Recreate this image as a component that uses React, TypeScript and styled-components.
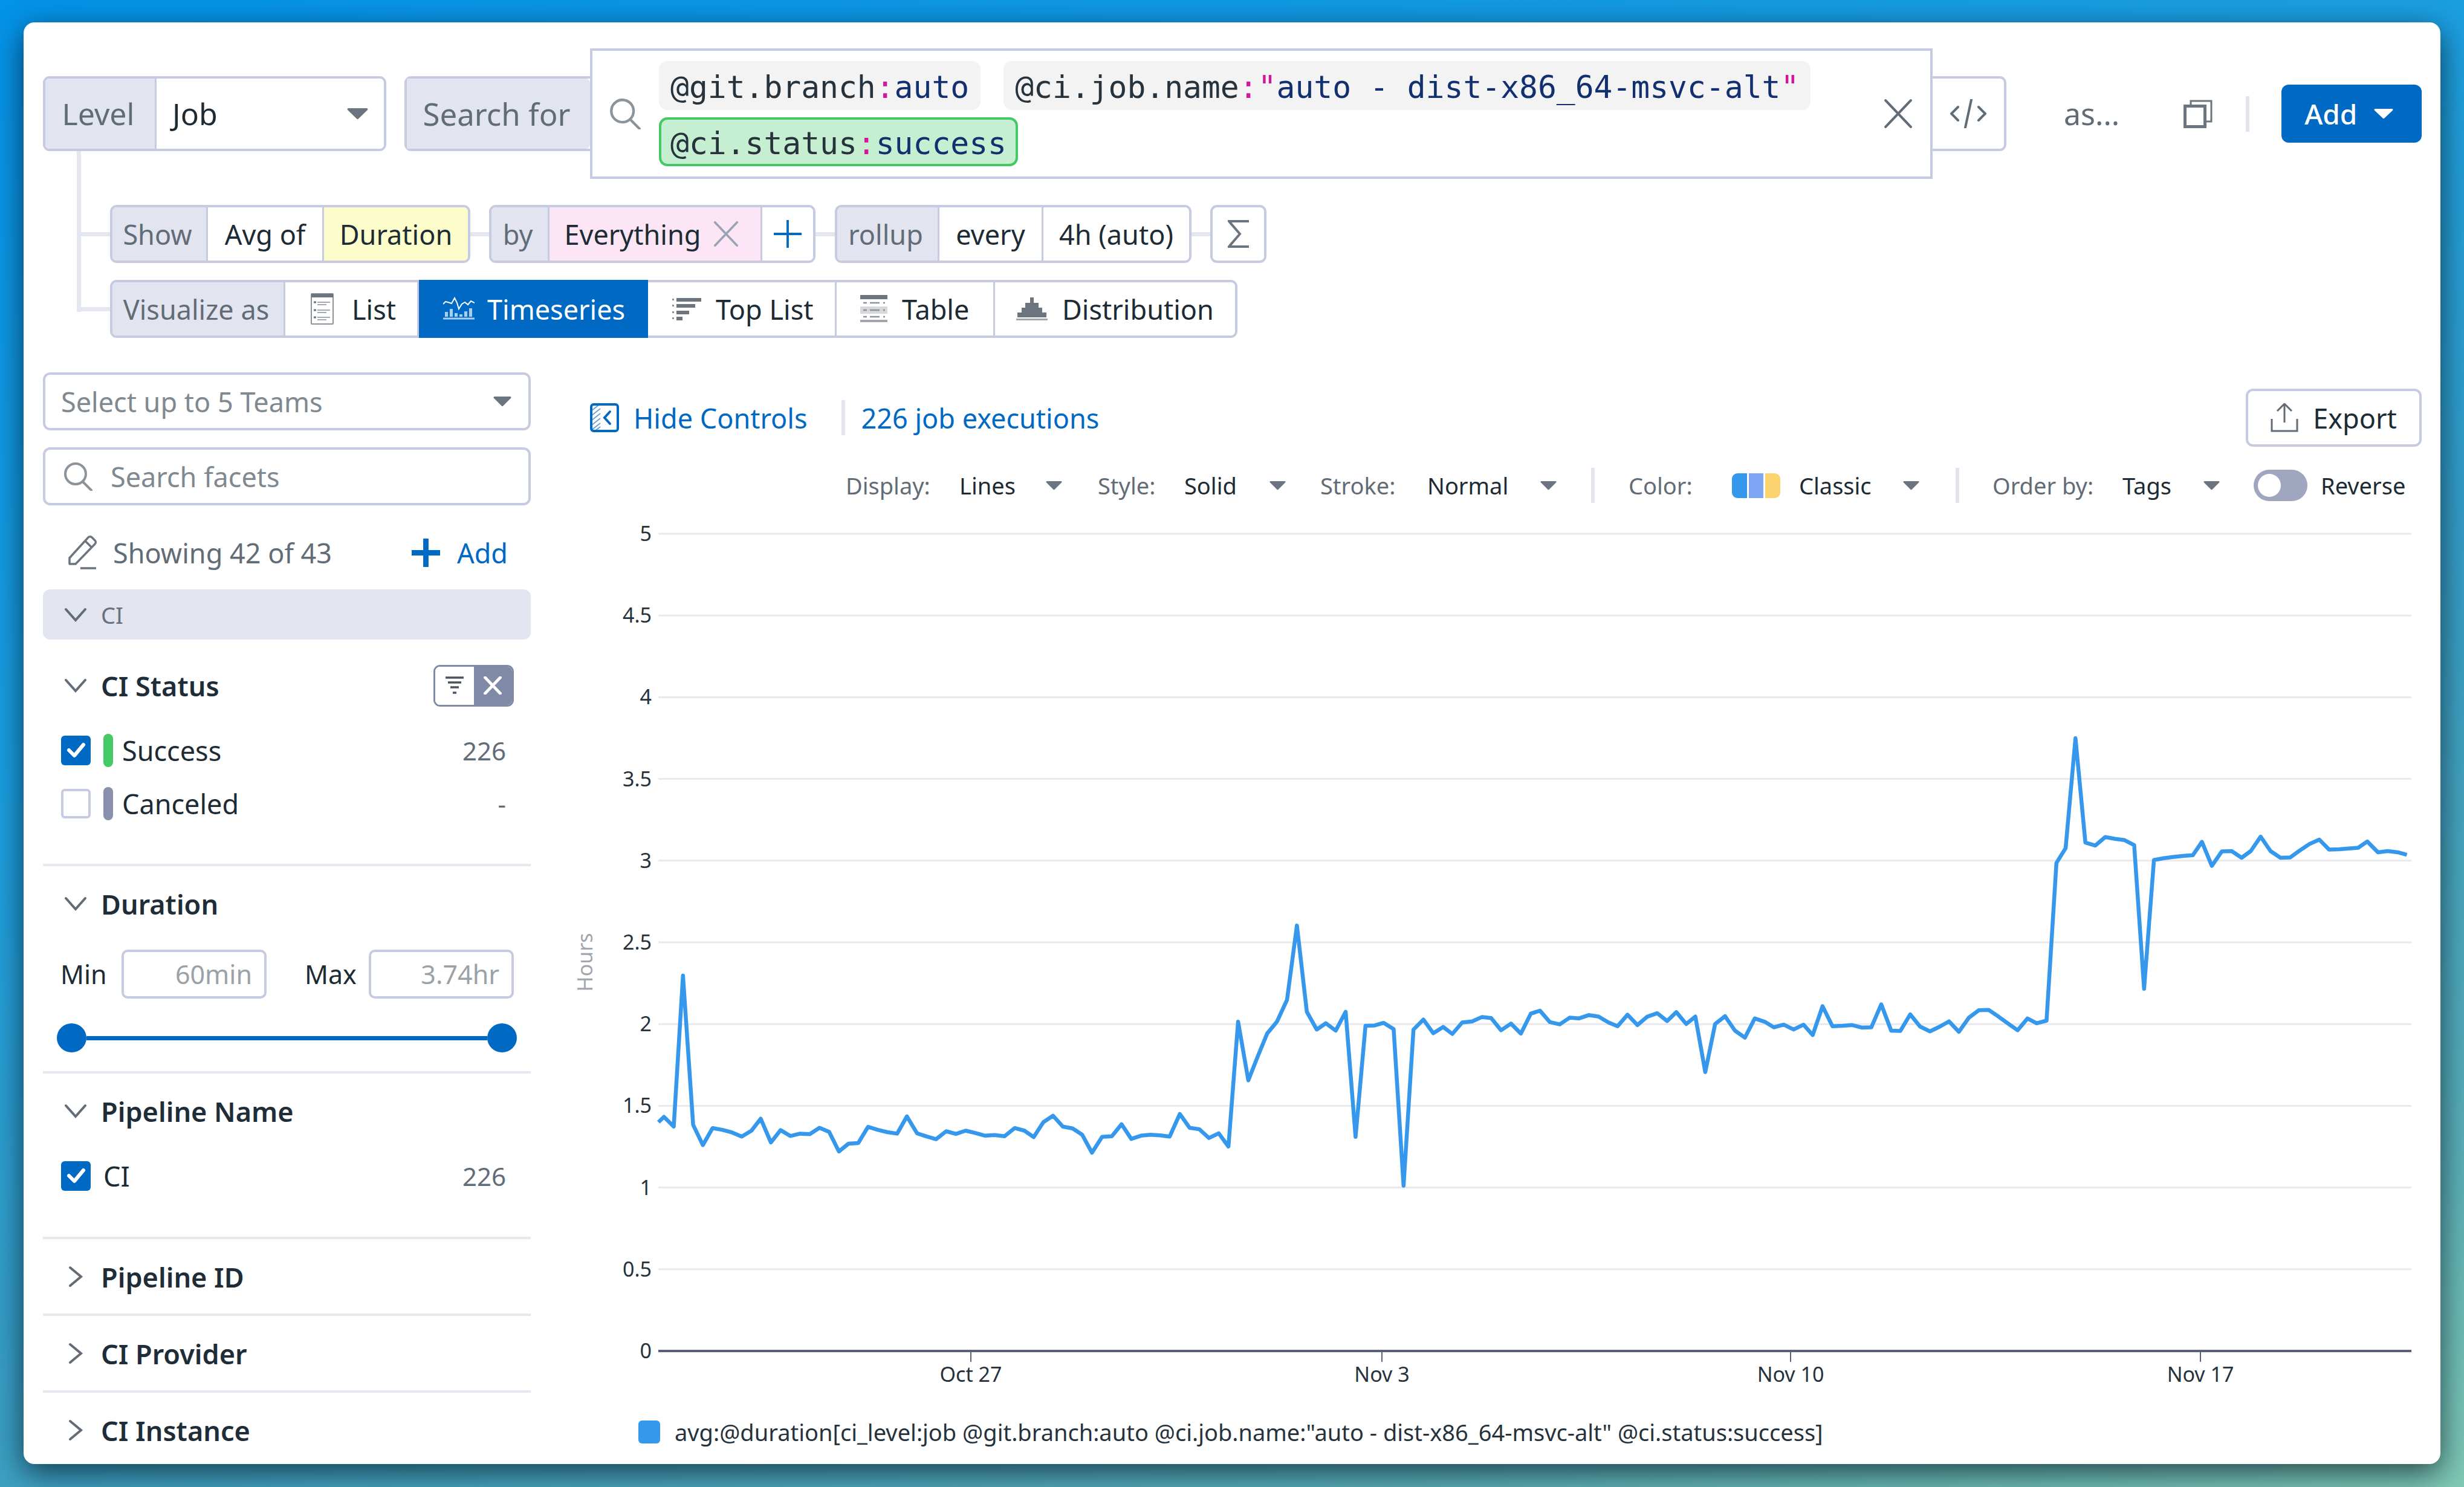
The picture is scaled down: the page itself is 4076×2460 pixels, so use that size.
import React from "react";
import styled, { createGlobalStyle } from "styled-components";

const borderColor = "#c7cbe1";
const labelBg = "#e2e5ef";
const blue = "#0069c4";
const ink = "#1c2b34";
const muted = "#626c77";

const GlobalStyle = createGlobalStyle`
  html, body { margin: 0; padding: 0; }
  body { font-family: "Noto Sans", "Open Sans", sans-serif; color: ${ink}; }
  * { box-sizing: border-box; }
`;

const Page = styled.div`
  width: 4076px;
  height: 2460px;
  padding: 37px 39px 38px;
  overflow: hidden;
  background: linear-gradient(162deg, #0493e8 0%, #1b9fe0 35%, #3a9fc4 62%, #5ab0b8 85%, #80c9b4 100%);
`;

const Card = styled.div`
  height: 100%;
  padding: 43px 31px 0 32px;
  background: #fff;
  border-radius: 18px;
  box-shadow: 0 14px 50px rgba(0, 15, 30, 0.7);
  overflow: hidden;
`;

const TopRow = styled.div`
  display: flex;
  align-items: center;
  height: 216px;
`;

const Group = styled.div<{ $h: number; $ml?: number }>`
  display: flex;
  flex: none;
  height: ${({ $h }) => $h}px;
  margin-left: ${({ $ml = 0 }) => $ml}px;
  border: 4px solid ${borderColor};
  border-radius: 11px;
`;

const Segment = styled.div<{ $w: number; $tone?: string; $fs?: number }>`
  display: flex;
  flex: none;
  align-items: center;
  justify-content: center;
  gap: 22px;
  width: ${({ $w }) => $w}px;
  padding-right: ${({ $tone }) => ($tone === "label" ? 6 : 0)}px;
  font-size: ${({ $fs = 45 }) => $fs}px;
  white-space: nowrap;
  color: ${({ $tone }) => ($tone === "label" ? muted : ink)};
  background: ${({ $tone }) =>
    $tone === "label" ? labelBg : $tone === "yellow" ? "#fdfdcc" : $tone === "pink" ? "#fce6f5" : "#fff"};
  &:first-child {
    border-radius: 7px 0 0 7px;
  }
  &:last-child {
    border-radius: 0 7px 7px 0;
  }
  & + & {
    border-left: 3px solid ${borderColor};
  }
`;

const LevelValue = styled(Segment)`
  justify-content: space-between;
  padding: 0 26px 0 26px;
`;

const RemovableSegment = styled(Segment)`
  gap: 20px;
  padding-right: 10px;
`;

const VizTab = styled(Segment)<{ $pl: number; $gap: number; $active?: boolean }>`
  justify-content: flex-start;
  gap: ${({ $gap }) => $gap}px;
  padding-left: ${({ $pl }) => $pl}px;
  ${({ $active }) =>
    $active
      ? `
    /* the selected tab paints over the group's border */
    margin: -4px 0;
    color: #fff;
    background: ${blue};
    && + * { border-left: 0; }
  `
      : ""}
`;

const SearchLabel = styled(Group)`
  border-right: 0;
  border-radius: 11px 0 0 11px;
`;

const SearchBox = styled.div`
  display: flex;
  flex: none;
  align-items: center;
  width: 2221px;
  height: 216px;
  padding: 0 28px 0 28px;
  border: 4px solid ${borderColor};
`;

const ChipWrap = styled.div`
  display: flex;
  flex: 1;
  flex-wrap: wrap;
  gap: 12px 38px;
  margin: 0 40px 0 30px;
`;

const Chip = styled.div<{ $ok?: boolean }>`
  display: flex;
  align-items: center;
  height: 81px;
  padding: 4px ${({ $ok }) => ($ok ? 15 : 19)}px 0;
  font-family: "DejaVu Sans Mono", monospace;
  font-size: 51.3px;
  white-space: pre;
  background: ${({ $ok }) => ($ok ? "#c6eed0" : "#f3f3f4")};
  border: ${({ $ok }) => ($ok ? "4px solid #45c866" : "0")};
  border-radius: 14px;
`;

const ChipKey = styled.span`
  color: #26323c;
`;
const ChipColon = styled.span`
  color: #d1179d;
`;
const ChipValue = styled.span`
  color: #12306f;
`;

const CodeButton = styled.div`
  display: flex;
  flex: none;
  align-items: center;
  justify-content: center;
  width: 122px;
  height: 124px;
  border: 4px solid ${borderColor};
  border-left: 0;
  border-radius: 0 11px 11px 0;
`;

const AsLabel = styled.div`
  margin-left: 95px;
  font-size: 50px;
  color: ${muted};
`;

const CopyButton = styled.div`
  display: flex;
  margin-left: 106px;
`;

const VDivider = styled.div<{ $h: number; $ml: number }>`
  flex: none;
  width: 6px;
  height: ${({ $h }) => $h}px;
  margin-left: ${({ $ml }) => $ml}px;
  background: #e3e5ee;
`;

const AddButton = styled.div`
  display: flex;
  flex: none;
  align-items: center;
  justify-content: space-between;
  width: 232px;
  height: 96px;
  margin-left: 53px;
  padding: 0 47px 0 38px;
  color: #fff;
  font-size: 46px;
  font-weight: 500;
  background: ${blue};
  border-radius: 12px;
`;

const QueryRows = styled.div`
  position: relative;
  display: flex;
  flex-direction: column;
  gap: 28px;
  margin: 43px 0 0 111px;

  /* tree connector from the Level box down to the last row */
  &::before {
    content: "";
    position: absolute;
    left: -55px;
    top: -89px;
    width: 7px;
    height: 266px;
    background: #e4e6f0;
  }
`;

const QueryRow = styled.div`
  position: relative;
  display: flex;
  align-items: center;

  &::before {
    content: "";
    position: absolute;
    left: -55px;
    top: 45px;
    width: 55px;
    height: 7px;
    background: #e4e6f0;
  }
`;

const Link = styled.div<{ $w: number }>`
  flex: none;
  width: ${({ $w }) => $w}px;
  height: 7px;
  background: #e4e6f0;
`;

const SigmaBox = styled.div`
  display: flex;
  align-items: center;
  justify-content: center;
  width: 93px;
  height: 96px;
  border: 4px solid ${borderColor};
  border-radius: 11px;
`;

const Main = styled.div`
  display: grid;
  grid-template-columns: 807px 3066px;
  column-gap: 62px;
  margin-top: 57px;
`;

const Sidebar = styled.div`
  display: flex;
  flex-direction: column;
`;

const Field = styled.div`
  display: flex;
  flex: none;
  align-items: center;
  height: 96px;
  padding: 0 28px 0 26px;
  font-size: 45px;
  color: #808890;
  border: 4px solid ${borderColor};
  border-radius: 12px;
`;

const TeamsField = styled(Field)`
  justify-content: space-between;
`;

const FacetField = styled(Field)`
  gap: 30px;
  margin-top: 28px;
  padding-left: 30px;
`;

const ShowingRow = styled.div`
  display: flex;
  align-items: center;
  height: 90px;
  margin: 33px 0 16px;
  padding: 0 38px 0 42px;
  font-size: 45px;
  color: ${muted};
`;

const ShowingText = styled.div`
  flex: 1;
  margin-left: 26px;
`;

const AddFacet = styled.div`
  display: flex;
  align-items: center;
  gap: 28px;
  color: ${blue};
`;

const Band = styled.div`
  display: flex;
  align-items: center;
  gap: 24px;
  height: 83px;
  padding-left: 36px;
  font-size: 38px;
  color: #68727f;
  background: ${labelBg};
  border-radius: 12px;
`;

const Section = styled.div<{ $pt?: number; $pb: number }>`
  padding: ${({ $pt = 22 }) => $pt}px 0 ${({ $pb }) => $pb}px;
  border-bottom: 4px solid #e6e8f0;
`;

const SectionHeader = styled.div`
  display: flex;
  align-items: center;
  height: 80px;
  padding-left: 36px;
  font-size: 45px;
  font-weight: 600;
  color: #1f2d38;
`;

const ChevronSlot = styled.div`
  display: flex;
  flex: none;
  width: 60px;
  align-items: center;
  justify-content: flex-start;
`;

const FilterToggle = styled.div`
  display: flex;
  width: 133px;
  height: 69px;
  margin-left: auto;
  margin-right: 28px;
  overflow: hidden;
  border: 3px solid #8089a6;
  border-radius: 11px;
`;

const ToggleHalf = styled.div<{ $on?: boolean }>`
  display: flex;
  flex: 1;
  align-items: center;
  justify-content: center;
  background: ${({ $on }) => ($on ? "#8089a6" : "#fff")};
`;

const FacetRows = styled.div`
  margin-top: 23px;
  padding: 0 41px 0 30px;
`;

const FacetRow = styled.div`
  display: flex;
  align-items: center;
  height: 88px;
  font-size: 45px;
`;

const Check = styled.div<{ $on?: boolean }>`
  display: flex;
  flex: none;
  align-items: center;
  justify-content: center;
  width: 49px;
  height: 49px;
  background: ${({ $on }) => ($on ? blue : "#fff")};
  border: ${({ $on }) => ($on ? "0" : `4px solid ${borderColor}`)};
  border-radius: 6px;
`;

const StatusBar = styled.div<{ $color: string }>`
  flex: none;
  width: 16px;
  height: 55px;
  margin-left: 21px;
  background: ${({ $color }) => $color};
  border-radius: 8px;
`;

const FacetName = styled.div<{ $ml: number }>`
  flex: 1;
  margin-left: ${({ $ml }) => $ml}px;
`;

const FacetCount = styled.div`
  color: ${muted};
  font-size: 42px;
`;

const RangeRow = styled.div`
  display: flex;
  align-items: center;
  height: 81px;
  margin-top: 36px;
  padding-left: 29px;
  font-size: 43px;
`;

const RangeLabel = styled.div<{ $w: number; $ml?: number }>`
  width: ${({ $w }) => $w}px;
  margin-left: ${({ $ml = 0 }) => $ml}px;
`;

const RangeInput = styled.div`
  display: flex;
  align-items: center;
  justify-content: flex-end;
  width: 240px;
  height: 81px;
  padding-right: 20px;
  color: #9aa2a8;
  border: 4px solid ${borderColor};
  border-radius: 10px;
`;

const Slider = styled.div`
  display: flex;
  align-items: center;
  width: 761px;
  height: 48px;
  margin: 41px 0 0 23px;
`;

const Knob = styled.div`
  flex: none;
  width: 49px;
  height: 48px;
  background: ${blue};
  border-radius: 50%;
`;

const Track = styled.div`
  flex: 1;
  height: 7px;
  background: ${blue};
`;

const Content = styled.div`
  display: flex;
  flex-direction: column;
`;

const ContentTop = styled.div`
  display: flex;
  align-items: center;
  height: 96px;
  margin-top: 27px;
  padding-left: 36px;
  font-size: 45px;
  color: ${blue};
`;

const HideLink = styled.div`
  display: flex;
  align-items: center;
  gap: 24px;
`;

const Executions = styled.div`
  margin-left: 27px;
`;

const ExportButton = styled.div`
  display: flex;
  align-items: center;
  justify-content: center;
  gap: 24px;
  width: 291px;
  height: 96px;
  margin-left: auto;
  color: ${ink};
  border: 4px solid ${borderColor};
  border-radius: 12px;
`;

const ControlRow = styled.div`
  display: flex;
  align-items: center;
  height: 60px;
  margin-top: 34px;
  padding-left: 459px;
  font-size: 38px;
`;

const Control = styled.div<{ $ml: number }>`
  display: flex;
  align-items: center;
  margin-left: ${({ $ml }) => $ml}px;
`;

const ControlLabel = styled.div<{ $w: number }>`
  width: ${({ $w }) => $w}px;
  color: ${muted};
`;

const ControlValue = styled.div<{ $w: number }>`
  width: ${({ $w }) => $w}px;
  color: ${ink};
`;

const Swatch = styled.div`
  display: flex;
  gap: 3px;
  width: 80px;
  height: 41px;
  margin-right: 31px;
  overflow: hidden;
  border-radius: 9px;
`;

const SwatchStripe = styled.div<{ $color: string }>`
  flex: 1;
  background: ${({ $color }) => $color};
`;

const Switch = styled.div`
  display: flex;
  align-items: center;
  width: 89px;
  height: 52px;
  margin-left: 56px;
  padding-left: 7px;
  background: #a0a6bf;
  border-radius: 26px;
`;

const SwitchKnob = styled.div`
  width: 38px;
  height: 38px;
  background: #fff;
  border-radius: 50%;
`;

const SwitchLabel = styled.div`
  margin-left: 22px;
  color: ${ink};
`;

const ChartSvg = styled.svg`
  display: block;
  width: 3066px;
  height: 1460px;
  margin-top: 7px;
`;

const Legend = styled.div`
  display: flex;
  align-items: center;
  height: 38px;
  margin-top: 50px;
  padding-left: 116px;
  font-size: 38px;
  white-space: nowrap;
  color: #26323c;
`;

const LegendSwatch = styled.div`
  width: 36px;
  height: 38px;
  margin-right: 24px;
  background: #3598ec;
  border-radius: 6px;
`;

const Caret = ({ w, h, color = "#6c7480" }: { w: number; h: number; color?: string }) => (
  <svg width={w} height={h} viewBox="0 0 30 18" preserveAspectRatio="none">
    <path d="M2 1h26a1.5 1.5 0 0 1 1.2 2.4L16.2 16.6a1.6 1.6 0 0 1-2.4 0L.8 3.4A1.5 1.5 0 0 1 2 1z" fill={color} />
  </svg>
);

const SearchGlyph = ({ size, color = "#8b939b" }: { size: number; color?: string }) => (
  <svg width={size} height={size} viewBox="0 0 48 48" fill="none" stroke={color} strokeWidth="4" strokeLinecap="round">
    <circle cx="20" cy="20" r="17" />
    <path d="M32 33l14 14" />
  </svg>
);

const Cross = ({ size, color, width = 4 }: { size: number; color: string; width?: number }) => (
  <svg width={size} height={size} viewBox="0 0 48 48" fill="none" stroke={color} strokeWidth={width} strokeLinecap="round">
    <path d="M4 3l40 42M44 3L4 45" />
  </svg>
);

const Chevron = ({ open }: { open: boolean }) =>
  open ? (
    <svg width="36" height="24" viewBox="0 0 36 24" fill="none" stroke="#626c77" strokeWidth="4" strokeLinecap="round">
      <path d="M2 3l16 18L34 3" />
    </svg>
  ) : (
    <svg width="36" height="36" viewBox="0 0 36 36" fill="none" stroke="#626c77" strokeWidth="4" strokeLinecap="round">
      <path d="M9 3l18 15L9 33" />
    </svg>
  );

const CheckMark = () => (
  <svg width="32" height="26" viewBox="0 0 32 26" fill="none" stroke="#fff" strokeWidth="6" strokeLinecap="round" strokeLinejoin="round">
    <path d="M4 13l9 9L28 4" />
  </svg>
);

const ListIcon = () => (
  <svg width="38" height="52" viewBox="0 0 38 52">
    <rect x="1" y="1" width="36" height="50" rx="1" fill="#fff" stroke="#8b929a" strokeWidth="2" />
    <rect x="1" y="1" width="36" height="6" fill="#6c7480" />
    <path d="M11 15h21M11 19h15M11 28h21M11 32h15M11 40h21M11 44h15" stroke="#a4aab1" strokeWidth="2" />
    <path d="M5 15h4M5 28h4M5 40h4" stroke="#6c7480" strokeWidth="3" />
  </svg>
);

const TimeseriesIcon = () => (
  <svg width="52" height="40" viewBox="0 0 52 40" fill="none">
    <path d="M3 25h5v8H3zM11 20h5v13h-5zM19 27h5v6h-5zM27 29h5v4h-5zM35 24h5v9h-5zM43 19h5v14h-5z" fill="#a9cdec" />
    <path d="M0 36h52" stroke="#a9cdec" strokeWidth="3" />
    <path d="M0 12l4-4 4 1 6 2 5-9 4 8 3 10 5-8 5-3 5 4 5-6 6 3" stroke="#fff" strokeWidth="2" />
  </svg>
);

const TopListIcon = () => (
  <svg width="48" height="38" viewBox="0 0 48 38" fill="#6c7480">
    <path d="M7 1h41v6H7zM7 11h31v6H7zM7 22h21v6H7zM7 32h10v6H7z" />
    <path d="M0 2h3v3H0zM0 12h3v3H0zM0 23h3v3H0zM0 33h3v3H0z" fill="#8b929a" />
  </svg>
);

const TableIcon = () => (
  <svg width="45" height="46" viewBox="0 0 45 46">
    <rect width="45" height="7" fill="#6c7480" />
    <rect y="19" width="45" height="12" fill="#d6d8dc" />
    <rect y="41" width="45" height="4" fill="#a0a6ac" />
    <path d="M5 13h6M16 13h16M38 13h3M5 25h6M16 25h16M38 25h3M5 36h6M16 36h16M38 36h3" stroke="#8b929a" strokeWidth="2.5" />
  </svg>
);

const DistributionIcon = () => (
  <svg width="52" height="39" viewBox="0 0 52 39">
    <path d="M23 0h6v9h8v8h6v8h7v8H2v-8h7v-8h6V9h8z" fill="#6c7480" />
    <rect y="35" width="52" height="3" fill="#9ea5ac" />
  </svg>
);

const SigmaIcon = () => (
  <svg width="36" height="46" viewBox="0 0 36 46" fill="none" stroke="#6c7480" strokeWidth="4">
    <path d="M35 2H2l18 21L2 44h33" />
  </svg>
);

const CodeIcon = () => (
  <svg width="60" height="48" viewBox="0 0 60 48" fill="none" stroke="#626c77" strokeWidth="4" strokeLinecap="round">
    <path d="M13 13L2 24l11 11M47 13l11 11-11 11M35 1L25 47" />
  </svg>
);

const CopyIcon = () => (
  <svg width="48" height="47" viewBox="0 0 48 47" fill="none" stroke="#6c7480">
    <path d="M12 8V2h34v34h-8" strokeWidth="3" />
    <rect x="2.5" y="10.5" width="33" height="34" strokeWidth="5" />
  </svg>
);

const PencilIcon = () => (
  <svg width="48" height="58" viewBox="0 0 48 58" fill="none" stroke="#6c7480" strokeWidth="3.5" strokeLinejoin="round">
    <path d="M2 48V38L33 4a4 4 0 0 1 6 0l5 5a4 4 0 0 1 0 6L12 48z" />
    <path d="M28 10l11 11M20 55h26" />
  </svg>
);

const PlusIcon = ({ size, stroke }: { size: number; stroke: number }) => (
  <svg width={size} height={size} viewBox="0 0 48 48" stroke={blue} strokeWidth={stroke}>
    <path d="M24 0v48M0 24h48" />
  </svg>
);

const FilterIcon = () => (
  <svg width="32" height="32" viewBox="0 0 32 32" stroke="#4a5360" strokeWidth="3.5">
    <path d="M1 3h30M5 11h22M9 19h14M13 28h6" />
  </svg>
);

const PanelIcon = () => (
  <svg width="48" height="48" viewBox="0 0 48 48" fill="none">
    <g stroke="#5c9fdc" strokeWidth="1.6">
      <path d="M3 12l14-11M3 20L17 9M3 28L17 17M3 36l14-11M3 44l14-11M8 46l9-7" />
    </g>
    <rect x="2" y="2" width="44" height="44" rx="4" stroke={blue} strokeWidth="4" />
    <path d="M33 14L24 24l9 10" stroke={blue} strokeWidth="4" strokeLinecap="round" />
  </svg>
);

const UploadIcon = () => (
  <svg width="46" height="48" viewBox="0 0 46 48" fill="none" stroke="#626c77" strokeWidth="3">
    <path d="M23 32V2M11 13L23 1l12 12M2 26v20h42V26" />
  </svg>
);

// points traced from the reference, in two crops with their own scales
const earlyPoints = [
  [195, 1148], [207, 1130], [228, 1163], [248, 648], [270, 1157], [291, 1226], [312, 1168], [333, 1174],
  [354, 1183], [375, 1197], [396, 1177], [416, 1136], [438, 1217], [459, 1175], [480, 1195], [501, 1187],
  [522, 1189], [543, 1167], [564, 1181], [585, 1248], [606, 1221], [627, 1219], [648, 1164], [669, 1174],
  [690, 1182], [711, 1187], [732, 1128], [754, 1186], [775, 1197], [795, 1206], [817, 1179], [838, 1188],
  [859, 1177], [880, 1185], [901, 1194], [922, 1192], [943, 1196], [965, 1168], [986, 1177], [1006, 1199],
  [1027, 1148], [1048, 1126], [1069, 1163], [1090, 1169], [1111, 1191], [1132, 1252], [1154, 1198],
  [1175, 1196], [1196, 1155], [1217, 1205], [1238, 1194], [1258, 1191], [1279, 1193], [1300, 1197],
  [1322, 1120], [1343, 1167], [1364, 1172], [1385, 1202], [1406, 1186], [1427, 1231], [1448, 805],
  [1470, 1005], [1490, 925], [1511, 845], [1532, 805],
].map(([x, y]) => [940 + x / 1.3067, 1300 + y / 2.063]);

const latePoints = [
  [23, 905], [36, 704], [49, 937], [62, 985], [74, 968], [87, 988], [100, 937], [113, 1275], [126, 975],
  [138, 974], [150, 967], [163, 984], [176, 1407], [189, 985], [202, 958], [215, 995], [228, 978], [240, 997],
  [253, 966], [266, 963], [279, 951], [291, 954], [304, 987], [317, 969], [330, 996], [343, 942], [355, 934],
  [368, 965], [381, 971], [394, 953], [406, 955], [419, 946], [432, 950], [445, 966], [457, 976], [470, 945],
  [483, 973], [496, 950], [509, 941], [522, 962], [534, 938], [547, 970], [559, 950], [572, 1100], [585, 970],
  [598, 949], [611, 988], [624, 1007], [637, 955], [650, 964], [662, 979], [675, 972], [688, 985], [701, 972],
  [713, 1000], [726, 922], [739, 976], [752, 975], [765, 973], [778, 980], [790, 979], [803, 917], [816, 988],
  [828, 989], [841, 944], [854, 977], [867, 990], [880, 977], [892, 963], [905, 991], [918, 953], [931, 933],
  [944, 932], [957, 950], [969, 968], [982, 987], [995, 955], [1007, 968], [1020, 961], [1033, 535], [1045, 495],
  [1058, 198], [1071, 480], [1084, 488], [1097, 465], [1110, 470], [1122, 473], [1135, 487], [1148, 875],
  [1161, 527], [1174, 522], [1186, 519], [1199, 516], [1212, 514], [1224, 478], [1237, 543], [1250, 504],
  [1263, 503], [1276, 521], [1288, 503], [1301, 464], [1314, 503], [1327, 521], [1340, 520], [1352, 502],
  [1365, 484], [1378, 472], [1391, 499], [1404, 498], [1416, 496], [1429, 494], [1441, 477], [1455, 506],
  [1468, 503], [1481, 506], [1493, 513],
].map(([x, y]) => [2100 + x / 0.7935, 1100 + y / 1.633]);

const linePath = [...earlyPoints, ...latePoints]
  .map(([x, y], i) => `${i ? "L" : "M"}${x.toFixed(1)} ${y.toFixed(1)}`)
  .join(" ");

const yTicks = ["5", "4.5", "4", "3.5", "3", "2.5", "2", "1.5", "1", "0.5"];
const xTicks = [
  { x: 1606, label: "Oct 27" },
  { x: 2286, label: "Nov 3" },
  { x: 2962, label: "Nov 10" },
  { x: 3640, label: "Nov 17" },
];

const Chart = () => (
  <ChartSvg viewBox="940 840 3066 1460" fontFamily="'Noto Sans', sans-serif" fontSize="34">
    {yTicks.map((label, i) => {
      const y = 883 + i * 135.2;
      return (
        <g key={label}>
          <line x1="1089" x2="3989" y1={y} y2={y} stroke="#e9e9eb" strokeWidth="3" />
          <text x="1078" y={y + 12} textAnchor="end" fill="#26323c">
            {label}
          </text>
        </g>
      );
    })}
    <text x="1078" y="2247" textAnchor="end" fill="#26323c">
      0
    </text>
    <line x1="1089" x2="3989" y1="2235" y2="2235" stroke="#5a6078" strokeWidth="4" />
    {xTicks.map(({ x, label }) => (
      <g key={label}>
        <line x1={x} x2={x} y1="2235" y2="2253" stroke="#5a6078" strokeWidth="2" />
        <text x={x} y="2286" textAnchor="middle" fill="#26323c">
          {label}
        </text>
      </g>
    ))}
    <text transform="translate(980 1592) rotate(-90)" textAnchor="middle" fill="#a0a6ad">
      Hours
    </text>
    <path d={linePath} fill="none" stroke="#3598ec" strokeWidth="6.5" strokeLinejoin="round" />
  </ChartSvg>
);

const controls = [
  { ml: 0, label: "Display:", lw: 188, value: "Lines", vw: 143 },
  { ml: 59, label: "Style:", lw: 143, value: "Solid", vw: 141 },
  { ml: 57, label: "Stroke:", lw: 177, value: "Normal", vw: 187 },
];

const App: React.FC = () => (
  <Page>
    <GlobalStyle />
    <Card>
      <TopRow>
        <Group $h={124}>
          <Segment $w={181} $tone="label" $fs={50}>
            Level
          </Segment>
          <LevelValue $w={379} $fs={50}>
            Job
            <Caret w={35} h={20} />
          </LevelValue>
        </Group>
        <SearchLabel $h={124} $ml={30}>
          <Segment $w={303} $tone="label" $fs={51}>
            Search for
          </Segment>
        </SearchLabel>
        <SearchBox>
          <SearchGlyph size={52} />
          <ChipWrap>
            <Chip>
              <ChipKey>@git.branch</ChipKey>
              <ChipColon>:</ChipColon>
              <ChipValue>auto</ChipValue>
            </Chip>
            <Chip>
              <ChipKey>@ci.job.name</ChipKey>
              <ChipColon>:"</ChipColon>
              <ChipValue>auto - dist-x86_64-msvc-alt</ChipValue>
              <ChipColon>"</ChipColon>
            </Chip>
            <Chip $ok>
              <ChipKey>@ci.status</ChipKey>
              <ChipColon>:</ChipColon>
              <ChipValue>success</ChipValue>
            </Chip>
          </ChipWrap>
          <Cross size={50} color="#626c77" />
        </SearchBox>
        <CodeButton>
          <CodeIcon />
        </CodeButton>
        <AsLabel>as...</AsLabel>
        <CopyButton>
          <CopyIcon />
        </CopyButton>
        <VDivider $h={59} $ml={55} />
        <AddButton>
          Add
          <Caret w={32} h={18} color="#fff" />
        </AddButton>
      </TopRow>

      <QueryRows>
        <QueryRow>
          <Group $h={96}>
            <Segment $w={155} $tone="label">
              Show
            </Segment>
            <Segment $w={192}>Avg of</Segment>
            <Segment $w={241} $tone="yellow">
              Duration
            </Segment>
          </Group>
          <Link $w={31} />
          <Group $h={96}>
            <Segment $w={93} $tone="label">
              by
            </Segment>
            <RemovableSegment $w={352} $tone="pink">
              Everything
              <Cross size={44} color="#9aa2b8" />
            </RemovableSegment>
            <Segment $w={87}>
              <PlusIcon size={46} stroke={4} />
            </Segment>
          </Group>
          <Link $w={32} />
          <Group $h={96}>
            <Segment $w={166} $tone="label">
              rollup
            </Segment>
            <Segment $w={172}>every</Segment>
            <Segment $w={244}>4h (auto)</Segment>
          </Group>
          <Link $w={31} />
          <SigmaBox>
            <SigmaIcon />
          </SigmaBox>
        </QueryRow>
        <QueryRow>
          <Group $h={96}>
            <Segment $w={283} $tone="label">
              Visualize as
            </Segment>
            <VizTab $w={221} $pl={42} $gap={30}>
              <ListIcon />
              List
            </VizTab>
            <VizTab $w={382} $pl={40} $gap={21} $active>
              <TimeseriesIcon />
              Timeseries
            </VizTab>
            <VizTab $w={309} $pl={40} $gap={24}>
              <TopListIcon />
              Top List
            </VizTab>
            <VizTab $w={262} $pl={39} $gap={24}>
              <TableIcon />
              Table
            </VizTab>
            <VizTab $w={400} $pl={35} $gap={24}>
              <DistributionIcon />
              Distribution
            </VizTab>
          </Group>
        </QueryRow>
      </QueryRows>

      <Main>
        <Sidebar>
          <TeamsField>
            Select up to 5 Teams
            <Caret w={30} h={18} />
          </TeamsField>
          <FacetField>
            <SearchGlyph size={48} />
            Search facets
          </FacetField>
          <ShowingRow>
            <PencilIcon />
            <ShowingText>Showing 42 of 43</ShowingText>
            <AddFacet>
              <PlusIcon size={47} stroke={9} />
              Add
            </AddFacet>
          </ShowingRow>
          <Band>
            <Chevron open />
            CI
          </Band>

          <Section $pt={36} $pb={56}>
            <SectionHeader>
              <ChevronSlot>
                <Chevron open />
              </ChevronSlot>
              CI Status
              <FilterToggle>
                <ToggleHalf>
                  <FilterIcon />
                </ToggleHalf>
                <ToggleHalf $on>
                  <Cross size={30} color="#fff" width={8} />
                </ToggleHalf>
              </FilterToggle>
            </SectionHeader>
            <FacetRows>
              <FacetRow>
                <Check $on>
                  <CheckMark />
                </Check>
                <StatusBar $color="#45c866" />
                <FacetName $ml={15}>Success</FacetName>
                <FacetCount>226</FacetCount>
              </FacetRow>
              <FacetRow>
                <Check />
                <StatusBar $color="#8890ac" />
                <FacetName $ml={15}>Canceled</FacetName>
                <FacetCount>-</FacetCount>
              </FacetRow>
            </FacetRows>
          </Section>

          <Section $pb={31}>
            <SectionHeader>
              <ChevronSlot>
                <Chevron open />
              </ChevronSlot>
              Duration
            </SectionHeader>
            <RangeRow>
              <RangeLabel $w={101}>Min</RangeLabel>
              <RangeInput>60min</RangeInput>
              <RangeLabel $w={106} $ml={63}>
                Max
              </RangeLabel>
              <RangeInput>3.74hr</RangeInput>
            </RangeRow>
            <Slider>
              <Knob />
              <Track />
              <Knob />
            </Slider>
          </Section>

          <Section $pb={57}>
            <SectionHeader>
              <ChevronSlot>
                <Chevron open />
              </ChevronSlot>
              Pipeline Name
            </SectionHeader>
            <FacetRows>
              <FacetRow>
                <Check $on>
                  <CheckMark />
                </Check>
                <FacetName $ml={21}>CI</FacetName>
                <FacetCount>226</FacetCount>
              </FacetRow>
            </FacetRows>
          </Section>

          <Section $pb={21}>
            <SectionHeader>
              <ChevronSlot>
                <Chevron open={false} />
              </ChevronSlot>
              Pipeline ID
            </SectionHeader>
          </Section>
          <Section $pb={21}>
            <SectionHeader>
              <ChevronSlot>
                <Chevron open={false} />
              </ChevronSlot>
              CI Provider
            </SectionHeader>
          </Section>
          <Section $pb={23}>
            <SectionHeader>
              <ChevronSlot>
                <Chevron open={false} />
              </ChevronSlot>
              CI Instance
            </SectionHeader>
          </Section>
        </Sidebar>

        <Content>
          <ContentTop>
            <HideLink>
              <PanelIcon />
              Hide Controls
            </HideLink>
            <VDivider $h={58} $ml={56} />
            <Executions>226 job executions</Executions>
            <ExportButton>
              <UploadIcon />
              Export
            </ExportButton>
          </ContentTop>

          <ControlRow>
            {controls.map((c) => (
              <Control key={c.label} $ml={c.ml}>
                <ControlLabel $w={c.lw}>{c.label}</ControlLabel>
                <ControlValue $w={c.vw}>{c.value}</ControlValue>
                <Caret w={27} h={16} />
              </Control>
            ))}
            <VDivider $h={58} $ml={57} />
            <Control $ml={56}>
              <ControlLabel $w={171}>Color:</ControlLabel>
              <Swatch>
                <SwatchStripe $color="#3598ec" />
                <SwatchStripe $color="#7ea6f5" />
                <SwatchStripe $color="#fdd36f" />
              </Swatch>
              <ControlValue $w={172}>Classic</ControlValue>
              <Caret w={27} h={16} />
            </Control>
            <VDivider $h={58} $ml={60} />
            <Control $ml={55}>
              <ControlLabel $w={215}>Order by:</ControlLabel>
              <ControlValue $w={134}>Tags</ControlValue>
              <Caret w={27} h={16} />
            </Control>
            <Switch>
              <SwitchKnob />
            </Switch>
            <SwitchLabel>Reverse</SwitchLabel>
          </ControlRow>

          <Chart />

          <Legend>
            <LegendSwatch />
            avg:@duration[ci_level:job @git.branch:auto @ci.job.name:"auto - dist-x86_64-msvc-alt" @ci.status:success]
          </Legend>
        </Content>
      </Main>
    </Card>
  </Page>
);

export default App;
